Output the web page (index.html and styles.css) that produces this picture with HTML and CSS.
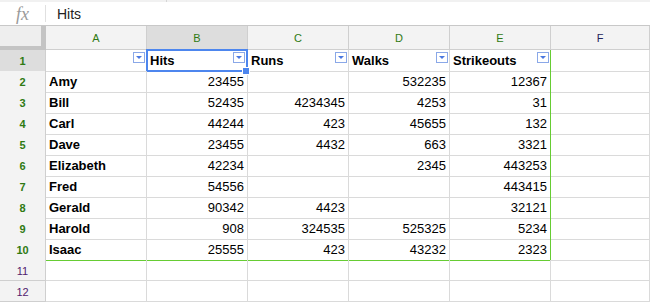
FILE: index.html
```html
<!DOCTYPE html>
<html>
<head>
<meta charset="utf-8">
<link rel="stylesheet" href="styles.css">
</head>
<body>
<div class="topband"><span class="tb-div"></span></div>
<div class="formula">
  <div class="fx">fx</div>
  <div class="fdiv"></div>
  <div class="ftext">Hits</div>
</div>
<div class="sheet">
  <div class="row head">
    <div class="corner"></div>
    <div class="ch in">A</div>
    <div class="ch in sel">B</div>
    <div class="ch in">C</div>
    <div class="ch in">D</div>
    <div class="ch in">E</div>
    <div class="ch out">F</div>
  </div>
  <div class="row">
    <div class="rh in sel">1</div>
    <div class="c hd"><span class="flt"></span></div>
    <div class="c hd selcell">Hits<span class="flt"></span><span class="handle"></span></div>
    <div class="c hd">Runs<span class="flt"></span></div>
    <div class="c hd">Walks<span class="flt"></span></div>
    <div class="c hd gr">Strikeouts<span class="flt"></span></div>
    <div class="c"></div>
  </div>
  <div class="row"><div class="rh in">2</div><div class="c nm">Amy</div><div class="c n">23455</div><div class="c n"></div><div class="c n">532235</div><div class="c n gr">12367</div><div class="c"></div></div>
  <div class="row"><div class="rh in">3</div><div class="c nm">Bill</div><div class="c n">52435</div><div class="c n">4234345</div><div class="c n">4253</div><div class="c n gr">31</div><div class="c"></div></div>
  <div class="row"><div class="rh in">4</div><div class="c nm">Carl</div><div class="c n">44244</div><div class="c n">423</div><div class="c n">45655</div><div class="c n gr">132</div><div class="c"></div></div>
  <div class="row"><div class="rh in">5</div><div class="c nm">Dave</div><div class="c n">23455</div><div class="c n">4432</div><div class="c n">663</div><div class="c n gr">3321</div><div class="c"></div></div>
  <div class="row"><div class="rh in">6</div><div class="c nm">Elizabeth</div><div class="c n">42234</div><div class="c n"></div><div class="c n">2345</div><div class="c n gr">443253</div><div class="c"></div></div>
  <div class="row"><div class="rh in">7</div><div class="c nm">Fred</div><div class="c n">54556</div><div class="c n"></div><div class="c n"></div><div class="c n gr">443415</div><div class="c"></div></div>
  <div class="row"><div class="rh in">8</div><div class="c nm">Gerald</div><div class="c n">90342</div><div class="c n">4423</div><div class="c n"></div><div class="c n gr">32121</div><div class="c"></div></div>
  <div class="row"><div class="rh in">9</div><div class="c nm">Harold</div><div class="c n">908</div><div class="c n">324535</div><div class="c n">525325</div><div class="c n gr">5234</div><div class="c"></div></div>
  <div class="row last"><div class="rh in">10</div><div class="c nm gb">Isaac</div><div class="c n gb">25555</div><div class="c n gb">423</div><div class="c n gb">43232</div><div class="c n gr gb">2323</div><div class="c"></div></div>
  <div class="row"><div class="rh out">11</div><div class="c"></div><div class="c"></div><div class="c"></div><div class="c"></div><div class="c"></div><div class="c"></div></div>
  <div class="row"><div class="rh out">12</div><div class="c"></div><div class="c"></div><div class="c"></div><div class="c"></div><div class="c"></div><div class="c"></div></div>
</div>
</body>
</html>
```

FILE: styles.css
```css
html, body {
  margin: 0;
  padding: 0;
  background: #fff;
  font-family: "Liberation Sans", Arial, sans-serif;
  font-size: 13px;
  color: #000;
  overflow: hidden;
}
.topband {
  height: 2px;
  background: #f1f1f1;
  position: relative;
}
.tb-div {
  position: absolute;
  left: 166px;
  top: 0;
  width: 1px;
  height: 2px;
  background: #d6d6d6;
}
.formula {
  height: 23px;
  display: flex;
  align-items: center;
  border-bottom: 1px solid #c8c8c8;
  box-sizing: content-box;
}
.fx {
  width: 45px;
  text-align: center;
  font-family: "Liberation Serif", "Times New Roman", serif;
  font-style: italic;
  font-size: 18px;
  color: #9a9a9a;
  line-height: 20px;
}
.fdiv {
  width: 1px;
  height: 17px;
  background: #e0e0e0;
}
.ftext {
  padding-left: 11px;
  font-size: 14px;
  color: #222;
}
.sheet {
  display: flex;
  flex-direction: column;
}
.row {
  display: grid;
  grid-template-columns: 46px repeat(5, 101px) 1fr;
  height: 21px;
}
.row.head {
  height: 24px;
}
.corner {
  background: #eeeeee;
  border-right: 5px solid #c4c4c4;
  border-bottom: 4px solid #c4c4c4;
  box-sizing: border-box;
}
.ch {
  background: #f3f3f3;
  border-right: 1px solid #cfcfcf;
  border-bottom: 1px solid #cfcfcf;
  display: flex;
  align-items: center;
  justify-content: center;
  font-size: 11px;
  padding-top: 1px;
  box-sizing: border-box;
}
.ch.sel {
  background: #dddddd;
}
.in {
  color: #2f7a12;
}
.ch.out {
  color: #24245a;
}
.rh {
  background: #f3f3f3;
  border-right: 1px solid #cfcfcf;
  border-bottom: 1px solid #cfcfcf;
  display: flex;
  align-items: center;
  justify-content: center;
  font-size: 11px;
  font-weight: bold;
  padding-top: 1px;
  box-sizing: border-box;
}
.rh.sel {
  background: #dddddd;
}
.rh.out {
  color: #521a6e;
  font-weight: normal;
}
.c {
  border-right: 1px solid #dadada;
  border-bottom: 1px solid #dadada;
  box-sizing: border-box;
  display: flex;
  align-items: center;
  padding: 1px 3px 0 3px;
  white-space: nowrap;
  position: relative;
  line-height: 20px;
}
.hd, .nm {
  font-weight: bold;
}
.c.n {
  justify-content: flex-end;
}
.c.gr {
  border-right: 1px solid #66cc33;
}
.c.gb {
  border-bottom: 1px solid #66cc33;
}
.flt {
  position: absolute;
  right: 1px;
  top: 2px;
  width: 12px;
  height: 11px;
  border: 1px solid #8aa8e8;
  box-sizing: border-box;
  background: #fff;
}
.flt::after {
  content: "";
  position: absolute;
  left: 2px;
  top: 3px;
  border-left: 3px solid transparent;
  border-right: 3px solid transparent;
  border-top: 3px solid #4a78e0;
}
.selcell::before {
  content: "";
  position: absolute;
  left: -1px;
  top: -1px;
  right: -1px;
  bottom: -1px;
  border: 2px solid #4d86ee;
  pointer-events: none;
}
.selcell .flt {
  right: 2px;
}
.handle {
  position: absolute;
  right: -3px;
  bottom: -4px;
  width: 6px;
  height: 6px;
  background: #4d86ee;
  border: 1px solid #fff;
  z-index: 2;
}
```
